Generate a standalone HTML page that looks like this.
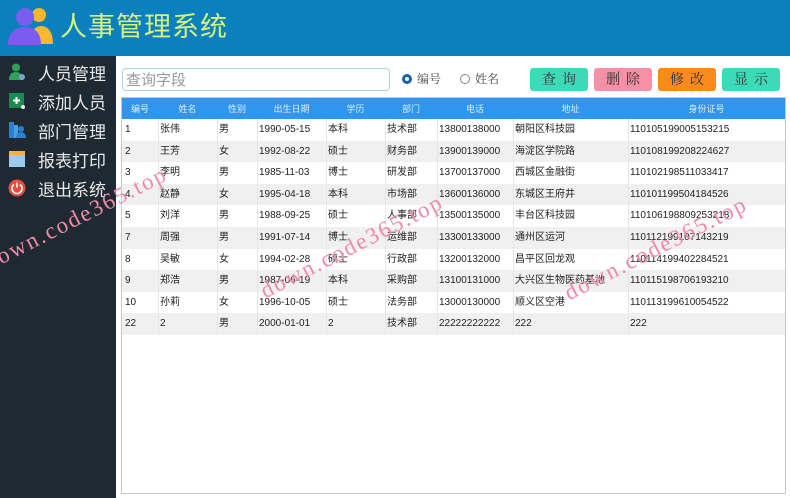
<!DOCTYPE html>
<html><head><meta charset="utf-8"><style>
*{margin:0;padding:0;box-sizing:border-box}
body{width:790px;height:498px;overflow:hidden;background:#fff;font-family:"Liberation Sans","Noto Sans CJK SC",sans-serif;position:relative}
.hdr{position:absolute;left:0;top:0;width:790px;height:56px;background:#0a80be}
.title{position:absolute;left:60px;top:8px;font-size:27px;line-height:34px;color:#d6f27a;font-family:"Noto Sans CJK SC",sans-serif;letter-spacing:1px}
.side{position:absolute;left:0;top:56px;width:116px;height:442px;background:#1e2932}
.mi{position:absolute;left:38px;font-size:17px;line-height:22px;color:#e8e8e8;font-family:"Noto Sans CJK SC",sans-serif}
.ic{position:absolute;left:8px;width:18px;height:18px}
.inp{position:absolute;left:122px;top:68px;width:268px;height:23px;border:1px solid #a9d6e4;border-radius:4px;font-size:15px;color:#999;padding:0 3px;line-height:21px;font-family:"Noto Sans CJK SC",sans-serif}
.rad{position:absolute;top:71px;font-size:12px;line-height:16px;color:#444;font-family:"Noto Serif CJK SC",serif}
.rad i{display:inline-block;width:10px;height:10px;border-radius:50%;border:1px solid #888;vertical-align:-1px;margin-right:5px}
.btn{position:absolute;top:68px;width:58px;height:23px;border-radius:3px;font-size:14px;text-align:center;line-height:23px;color:#333;letter-spacing:6px;text-indent:6px;font-family:"Noto Serif CJK SC",serif}
.tbl{position:absolute;left:121px;top:97px;width:665px;height:397px;border:1px solid #c8c8c8;background:#fff}
.th{position:absolute;left:122px;top:98px;width:663px;height:21px;background:#2f96f0}
.c{position:absolute;font-size:10px;line-height:12px;height:12px;color:#222;white-space:nowrap;font-family:"Liberation Sans","Noto Sans CJK SC",sans-serif}
.h{position:absolute;font-size:9px;line-height:12px;color:#dceeff;top:103px;text-align:center}
.row{position:absolute;left:122px;width:663px;height:21.6px}
.vl{position:absolute;top:119px;width:1px;height:216px;background:#e6e6e6}
.wm{position:absolute;font-family:"Liberation Serif",serif;font-size:23px;color:#f08aa8;transform:rotate(-27deg);transform-origin:left bottom;white-space:nowrap;letter-spacing:2px}
</style></head><body>
<div class="hdr"></div>
<svg style="position:absolute;left:8px;top:6px" width="46" height="40" viewBox="0 0 46 40">
<circle cx="31" cy="9" r="7" fill="#f5b82e"/><path d="M22 38 C22 26 27 20 33 20 C40 20 45 26 45 38Z" fill="#f5b82e"/>
<circle cx="17" cy="11" r="9" fill="#7b5cf0"/><path d="M0 39 C0 26 8 21 17 21 C26 21 33 26 33 39Z" fill="#7b5cf0"/>
</svg>
<div class="title">人事管理系统</div>
<div class="side"></div>
<svg class="ic" style="top:63px" viewBox="0 0 18 18"><circle cx="8" cy="4.5" r="4" fill="#2ea05a"/><path d="M1 17 C1 11 4 9 8 9 C12 9 14 11 14 17Z" fill="#2ea05a"/><circle cx="14" cy="14" r="3" fill="#7ac"/></svg>
<div class="mi" style="top:62px">人员管理</div>
<svg class="ic" style="top:92px" viewBox="0 0 18 18"><rect x="1" y="1" width="15" height="15" fill="#1d8a52"/><path d="M8.5 5v7M5 8.5h7" stroke="#fff" stroke-width="2"/><circle cx="15" cy="15" r="2" fill="#eee"/></svg>
<div class="mi" style="top:91px">添加人员</div>
<svg class="ic" style="top:121px" viewBox="0 0 18 18"><rect x="1" y="1" width="5" height="16" fill="#2f7fd0"/><rect x="6" y="4" width="4" height="13" fill="#4aa0e8"/><circle cx="13" cy="8" r="3" fill="#2f7fd0"/><path d="M8 17c0-4 2-6 5-6s5 2 5 6z" fill="#2f7fd0"/></svg>
<div class="mi" style="top:120px">部门管理</div>
<svg class="ic" style="top:150px" viewBox="0 0 18 18"><rect x="1" y="1" width="16" height="16" fill="#9ccbf0"/><rect x="1" y="1" width="16" height="4" fill="#f4b04c"/></svg>
<div class="mi" style="top:149px">报表打印</div>
<svg class="ic" style="top:179px" viewBox="0 0 18 18"><circle cx="9" cy="9" r="8.5" fill="#e84c3d"/><path d="M6 5.5a5 5 0 1 0 6 0" stroke="#fff" stroke-width="1.6" fill="none"/><path d="M9 3.5v5" stroke="#fff" stroke-width="1.6"/></svg>
<div class="mi" style="top:178px">退出系统</div>

<div class="inp">查询字段</div>
<div class="rad" style="left:402px"><i style="border:3px solid #1a5fb0"></i>编号</div>
<div class="rad" style="left:460px"><i></i>姓名</div>
<div class="btn" style="left:530px;background:#3ddab8">查询</div>
<div class="btn" style="left:594px;background:#f78fa6">删除</div>
<div class="btn" style="left:658px;background:#fa8a1c">修改</div>
<div class="btn" style="left:722px;background:#3ddab8">显示</div>

<div class="tbl"></div>
<div class="th"></div>
<div class="h" style="left:122px;width:36px">编号</div>
<div class="h" style="left:158px;width:59px">姓名</div>
<div class="h" style="left:217px;width:40px">性别</div>
<div class="h" style="left:257px;width:69px">出生日期</div>
<div class="h" style="left:326px;width:59px">学历</div>
<div class="h" style="left:385px;width:52px">部门</div>
<div class="h" style="left:437px;width:76px">电话</div>
<div class="h" style="left:513px;width:115px">地址</div>
<div class="h" style="left:628px;width:157px">身份证号</div>

<div class="row" style="top:140.6px;background:#f0f0f0"></div>
<div class="row" style="top:183.8px;background:#f0f0f0"></div>
<div class="row" style="top:227px;background:#f0f0f0"></div>
<div class="row" style="top:270.2px;background:#f0f0f0"></div>
<div class="row" style="top:313.4px;background:#f0f0f0"></div>
<div class="vl" style="left:158px"></div><div class="vl" style="left:217px"></div><div class="vl" style="left:257px"></div><div class="vl" style="left:326px"></div><div class="vl" style="left:385px"></div><div class="vl" style="left:437px"></div><div class="vl" style="left:513px"></div><div class="vl" style="left:628px"></div>

<div style="position:absolute;left:0;top:0">
<div class="c" style="left:125px;top:124px">1</div><div class="c" style="left:160px;top:124px">张伟</div><div class="c" style="left:219px;top:124px">男</div><div class="c" style="left:259px;top:124px">1990-05-15</div><div class="c" style="left:328px;top:124px">本科</div><div class="c" style="left:387px;top:124px">技术部</div><div class="c" style="left:439px;top:124px">13800138000</div><div class="c" style="left:515px;top:124px">朝阳区科技园</div><div class="c" style="left:630px;top:124px">110105199005153215</div>
<div class="c" style="left:125px;top:146px">2</div><div class="c" style="left:160px;top:146px">王芳</div><div class="c" style="left:219px;top:146px">女</div><div class="c" style="left:259px;top:146px">1992-08-22</div><div class="c" style="left:328px;top:146px">硕士</div><div class="c" style="left:387px;top:146px">财务部</div><div class="c" style="left:439px;top:146px">13900139000</div><div class="c" style="left:515px;top:146px">海淀区学院路</div><div class="c" style="left:630px;top:146px">110108199208224627</div>
<div class="c" style="left:125px;top:167px">3</div><div class="c" style="left:160px;top:167px">李明</div><div class="c" style="left:219px;top:167px">男</div><div class="c" style="left:259px;top:167px">1985-11-03</div><div class="c" style="left:328px;top:167px">博士</div><div class="c" style="left:387px;top:167px">研发部</div><div class="c" style="left:439px;top:167px">13700137000</div><div class="c" style="left:515px;top:167px">西城区金融街</div><div class="c" style="left:630px;top:167px">110102198511033417</div>
<div class="c" style="left:125px;top:189px">4</div><div class="c" style="left:160px;top:189px">赵静</div><div class="c" style="left:219px;top:189px">女</div><div class="c" style="left:259px;top:189px">1995-04-18</div><div class="c" style="left:328px;top:189px">本科</div><div class="c" style="left:387px;top:189px">市场部</div><div class="c" style="left:439px;top:189px">13600136000</div><div class="c" style="left:515px;top:189px">东城区王府井</div><div class="c" style="left:630px;top:189px">110101199504184526</div>
<div class="c" style="left:125px;top:210px">5</div><div class="c" style="left:160px;top:210px">刘洋</div><div class="c" style="left:219px;top:210px">男</div><div class="c" style="left:259px;top:210px">1988-09-25</div><div class="c" style="left:328px;top:210px">硕士</div><div class="c" style="left:387px;top:210px">人事部</div><div class="c" style="left:439px;top:210px">13500135000</div><div class="c" style="left:515px;top:210px">丰台区科技园</div><div class="c" style="left:630px;top:210px">110106198809253218</div>
<div class="c" style="left:125px;top:232px">7</div><div class="c" style="left:160px;top:232px">周强</div><div class="c" style="left:219px;top:232px">男</div><div class="c" style="left:259px;top:232px">1991-07-14</div><div class="c" style="left:328px;top:232px">博士</div><div class="c" style="left:387px;top:232px">运维部</div><div class="c" style="left:439px;top:232px">13300133000</div><div class="c" style="left:515px;top:232px">通州区运河</div><div class="c" style="left:630px;top:232px">110112199107143219</div>
<div class="c" style="left:125px;top:254px">8</div><div class="c" style="left:160px;top:254px">吴敏</div><div class="c" style="left:219px;top:254px">女</div><div class="c" style="left:259px;top:254px">1994-02-28</div><div class="c" style="left:328px;top:254px">硕士</div><div class="c" style="left:387px;top:254px">行政部</div><div class="c" style="left:439px;top:254px">13200132000</div><div class="c" style="left:515px;top:254px">昌平区回龙观</div><div class="c" style="left:630px;top:254px">110114199402284521</div>
<div class="c" style="left:125px;top:275px">9</div><div class="c" style="left:160px;top:275px">郑浩</div><div class="c" style="left:219px;top:275px">男</div><div class="c" style="left:259px;top:275px">1987-06-19</div><div class="c" style="left:328px;top:275px">本科</div><div class="c" style="left:387px;top:275px">采购部</div><div class="c" style="left:439px;top:275px">13100131000</div><div class="c" style="left:515px;top:275px">大兴区生物医药基地</div><div class="c" style="left:630px;top:275px">110115198706193210</div>
<div class="c" style="left:125px;top:297px">10</div><div class="c" style="left:160px;top:297px">孙莉</div><div class="c" style="left:219px;top:297px">女</div><div class="c" style="left:259px;top:297px">1996-10-05</div><div class="c" style="left:328px;top:297px">硕士</div><div class="c" style="left:387px;top:297px">法务部</div><div class="c" style="left:439px;top:297px">13000130000</div><div class="c" style="left:515px;top:297px">顺义区空港</div><div class="c" style="left:630px;top:297px">110113199610054522</div>
<div class="c" style="left:125px;top:318px">22</div><div class="c" style="left:160px;top:318px">2</div><div class="c" style="left:219px;top:318px">男</div><div class="c" style="left:259px;top:318px">2000-01-01</div><div class="c" style="left:328px;top:318px">2</div><div class="c" style="left:387px;top:318px">技术部</div><div class="c" style="left:439px;top:318px">22222222222</div><div class="c" style="left:515px;top:318px">222</div><div class="c" style="left:630px;top:318px">222</div>
</div>
<div class="wm" style="left:-8px;top:250px">down.code365.top</div>
<div class="wm" style="left:268px;top:278px">down.code365.top</div>
<div class="wm" style="left:572px;top:280px">down.code365.top</div>
</body></html>
